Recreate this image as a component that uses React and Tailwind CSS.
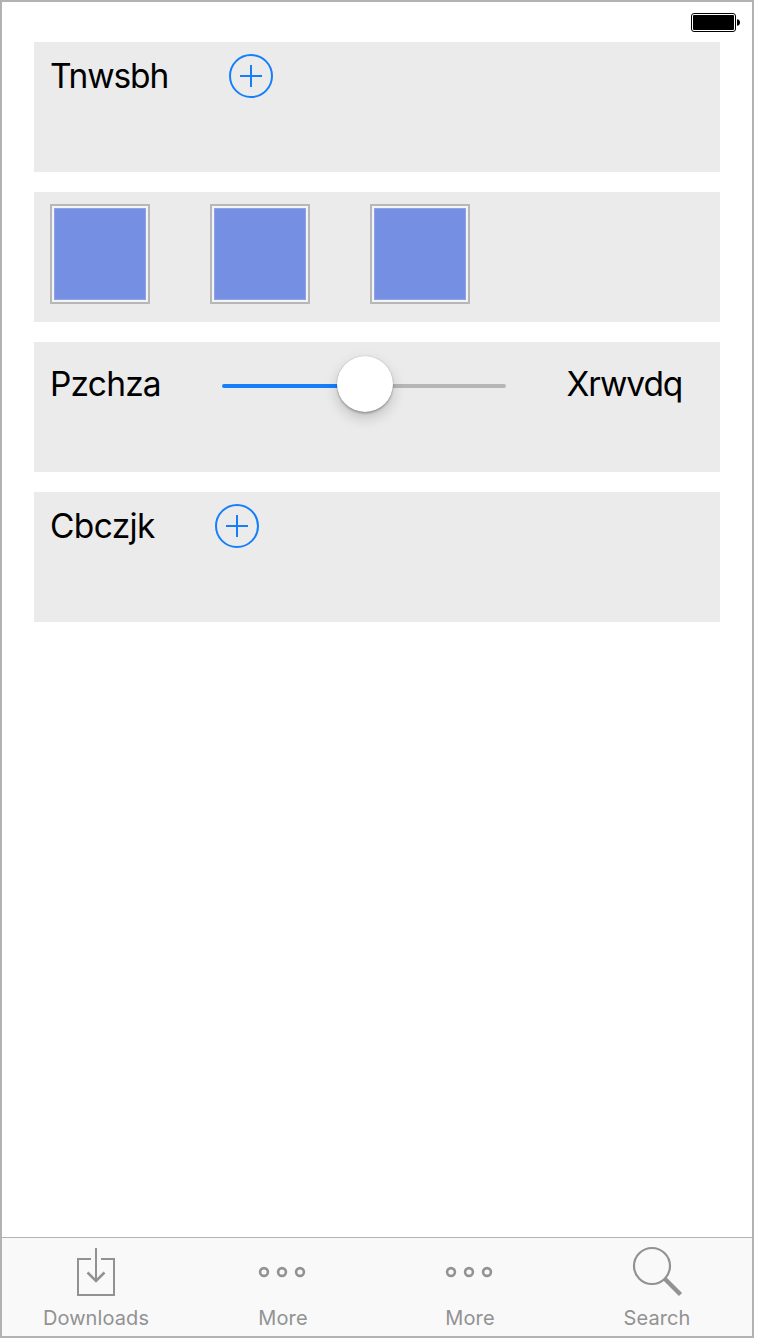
function Battery() {
  return (
    <svg className="block h-5 w-[50px]" viewBox="0 0 50 20" fill="none">
      <rect x="0.5" y="0.5" width="44" height="18" rx="2.5" stroke="#000" />
      <rect x="2" y="2" width="41" height="15" rx="1" fill="#000" />
      <path d="M46 6.2C48 6.4 49 7.7 49 9.5S48 12.6 46 12.8Z" fill="#000" />
    </svg>
  );
}

function AddButton() {
  return (
    <button type="button" aria-label="Add" className="h-11 w-11 shrink-0">
      <svg className="block h-11 w-11" viewBox="0 0 44 44" fill="none" stroke="#157efb" strokeWidth="2">
        <circle cx="22" cy="22" r="21" />
        <path d="M11 22H33M22 11V33" />
      </svg>
    </button>
  );
}

function Panel({ children }) {
  return <section className="flex h-[130px] items-start bg-[#ebebeb] px-4 pt-3">{children}</section>;
}

function Swatch() {
  return (
    <div className="h-[100px] w-[100px] border-2 border-[#b7b7b7] bg-[#f3f4f7] p-0.5">
      <div className="h-full w-full border border-[#8ea2e6] bg-[#758fe2]" />
    </div>
  );
}

function Slider() {
  return (
    <div className="mt-[2px] ml-[60px] flex h-14 w-[284px] items-center">
      <div className="mt-1 h-1 w-[115px] rounded-l-full bg-[#157efb]" />
      <div className="z-10 h-14 w-14 shrink-0 rounded-full bg-white shadow-[0_0_1px_rgba(0,0,0,0.35),0_2px_2px_rgba(0,0,0,0.2),0_6px_14px_rgba(0,0,0,0.18)]" />
      <div className="mt-1 h-1 w-[113px] rounded-r-full bg-[#b6b6b6]" />
    </div>
  );
}

function DownloadIcon() {
  return (
    <svg className="block h-[52px] w-[52px]" viewBox="0 0 52 52" fill="none" stroke="#929292" strokeWidth="2">
      <path d="M21 13H8V49H44V13H31" />
      <path d="M26 2V35" />
      <path d="M17.5 26.5L26 35L34.5 26.5" strokeWidth="2.5" />
    </svg>
  );
}

function MoreIcon() {
  return (
    <svg className="block h-[52px] w-[52px]" viewBox="0 0 52 52" fill="none" stroke="#929292" strokeWidth="2.6">
      <circle cx="7" cy="26" r="3.9" />
      <circle cx="25" cy="26" r="3.9" />
      <circle cx="43" cy="26" r="3.9" />
    </svg>
  );
}

function SearchIcon() {
  return (
    <svg className="block h-[52px] w-[52px]" viewBox="0 0 52 52" fill="none" stroke="#929292">
      <circle cx="21" cy="20" r="18" strokeWidth="2.2" />
      <path d="M34 33L49.5 48.5" strokeWidth="4.4" />
    </svg>
  );
}

const tabs = [
  { id: "downloads", label: "Downloads", Icon: DownloadIcon },
  { id: "more-1", label: "More", Icon: MoreIcon },
  { id: "more-2", label: "More", Icon: MoreIcon },
  { id: "search", label: "Search", Icon: SearchIcon },
];

export default function App() {
  return (
    <div className="h-[1340px] w-[760px] overflow-hidden bg-white font-['Inter','Liberation_Sans',sans-serif] text-black">
      <div className="flex h-[1338px] w-[754px] flex-col border-2 border-[#b2b2b2] bg-white">
        <header className="flex h-10 shrink-0 justify-end pt-[11px] pr-[11px]">
          <Battery />
        </header>
        <main className="flex grow flex-col gap-5 px-8 text-[33.5px] leading-[44px]">
          <Panel>
            <span className="w-[179px] tracking-[-1.15px]">Tnwsbh</span>
            <AddButton />
          </Panel>
          <Panel>
            <div className="flex gap-[60px]">
              <Swatch />
              <Swatch />
              <Swatch />
            </div>
          </Panel>
          <Panel>
            <span className="mt-2 w-28 tracking-[-0.8px]">Pzchza</span>
            <Slider />
            <span className="mt-2 ml-[60.5px] tracking-[-1.1px]">Xrwvdq</span>
          </Panel>
          <Panel>
            <span className="w-[165px] tracking-[-0.65px]">Cbczjk</span>
            <AddButton />
          </Panel>
        </main>
        <nav className="grid h-[99px] shrink-0 grid-cols-[188px_186px_188px_188px] border-t border-[#b2b2b2] bg-[#f9f9f9]">
          {tabs.map(({ id, label, Icon }) => (
            <div key={id} className="flex flex-col items-center pt-2 last:w-[186px]">
              <Icon />
              <span className="mt-2 text-[20px] leading-6 tracking-[0.1px] text-[#929292]">{label}</span>
            </div>
          ))}
        </nav>
      </div>
    </div>
  );
}
